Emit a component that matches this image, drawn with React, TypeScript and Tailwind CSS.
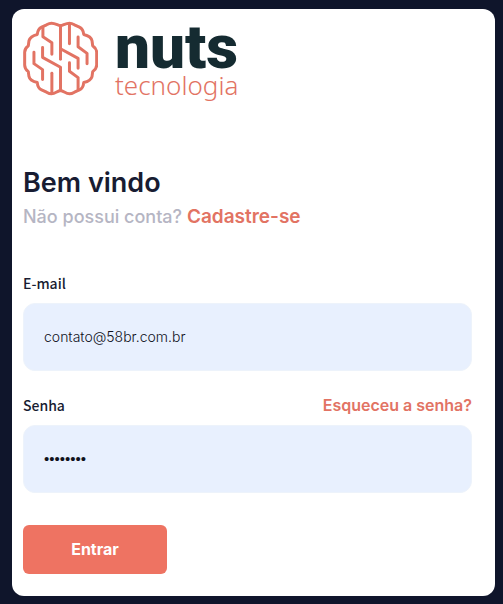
import { useState } from "react";

function BrainMark() {
  return (
    <svg
      viewBox="68 65 226 225"
      className="h-[75px] w-[75px] shrink-0"
      fill="none"
      stroke="#e27363"
      strokeWidth="9"
      strokeLinecap="round"
      strokeLinejoin="round"
      aria-hidden="true"
    >
      <path d="M181 79C190 77 197 71 208 71C214 71 218 73 223 76L238 83C247 87 250 94 251 105C264 108 274 114 276 124L278 139C285 144 290 150 290 159V197C290 206 285 212 278 217L276 232C273 243 264 247 251 250C250 261 247 268 238 272L223 279C218 282 214 284 208 284C197 284 190 275 181 274C172 275 165 284 154 284C148 284 144 282 139 279L124 272C115 268 112 261 111 250C98 247 88 243 86 232L84 217C77 212 73 206 73 197V159C73 150 77 144 84 139L86 124C89 114 98 108 111 105C112 94 115 87 124 83L139 76C144 73 148 71 154 71C165 71 172 77 181 79Z" />
      <path d="M181 79V180" />
      <path d="M128 84V112L155 130V165" />
      <path d="M127 144V174L181 204V274" />
      <path d="M101 159V193L127 211V241" />
      <path d="M155 222V282" />
      <path d="M208 74V133" />
      <path d="M181 148L234 177V207" />
      <path d="M234 113V142L261 162V193" />
      <path d="M208 190V216L234 235V270" />
    </svg>
  );
}

const inputClass =
  "h-[68px] w-full rounded-xl border border-[#edf3fb] bg-[#e8f0fe] px-5 pb-0.5 text-[#10121c] outline-none";
const labelClass =
  "font-['Noto_Sans_CJK_JP',sans-serif] text-sm leading-5 font-medium text-[#181c32]";

export default function App() {
  const [email, setEmail] = useState("contato@58br.com.br");
  const [password, setPassword] = useState("nuts2023");

  return (
    <div className="flex min-h-screen bg-[#0f152b] pt-[9px] pr-2 pb-2 pl-3 font-[Inter,sans-serif]">
      <main className="flex-1 rounded-xl bg-white pt-3 pr-[23px] pb-[22px] pl-[11px]">
        <div className="flex h-20 gap-[17px]">
          <BrainMark />
          <div>
            <div className="font-[Roboto,sans-serif] text-[62px] leading-[52px] font-black text-[#152b31]">nuts</div>
            <div className="font-['Noto_Sans',sans-serif] text-[26px] leading-6 font-light text-[#e27363]">tecnologia</div>
          </div>
        </div>

        <form className="mt-16" onSubmit={(e) => e.preventDefault()}>
          <h1 className="text-[27px] leading-9 font-semibold text-[#181c32]">Bem vindo</h1>
          <p className="mt-1 text-lg leading-6 font-medium text-[#b5b5c3]">
            Não possui conta?{" "}
            <a href="#cadastro" className="text-[19px] font-semibold text-[#e27363]">Cadastre-se</a>
          </p>

          <div className="mt-11 flex flex-col gap-[10px]">
            <label htmlFor="email" className={labelClass}>E-mail</label>
            <input
              id="email"
              type="email"
              value={email}
              onChange={(e) => setEmail(e.target.value)}
              className={`${inputClass} font-[Inter,sans-serif] text-sm font-light`}
            />
          </div>

          <div className="mt-6 flex flex-col gap-[10px]">
            <div className="flex items-center justify-between">
              <label htmlFor="senha" className={labelClass}>Senha</label>
              <a href="#recuperar" className="text-base leading-5 font-semibold text-[#e27363]">
                Esqueceu a senha?
              </a>
            </div>
            <input
              id="senha"
              type="password"
              value={password}
              onChange={(e) => setPassword(e.target.value)}
              className={`${inputClass} font-['Liberation_Sans',sans-serif] text-[15px]`}
            />
          </div>

          <button
            type="submit"
            className="mt-8 h-[49px] w-36 rounded-md bg-[#ee7362] pb-0.5 text-base font-bold text-white"
          >
            Entrar
          </button>
        </form>
      </main>
    </div>
  );
}
